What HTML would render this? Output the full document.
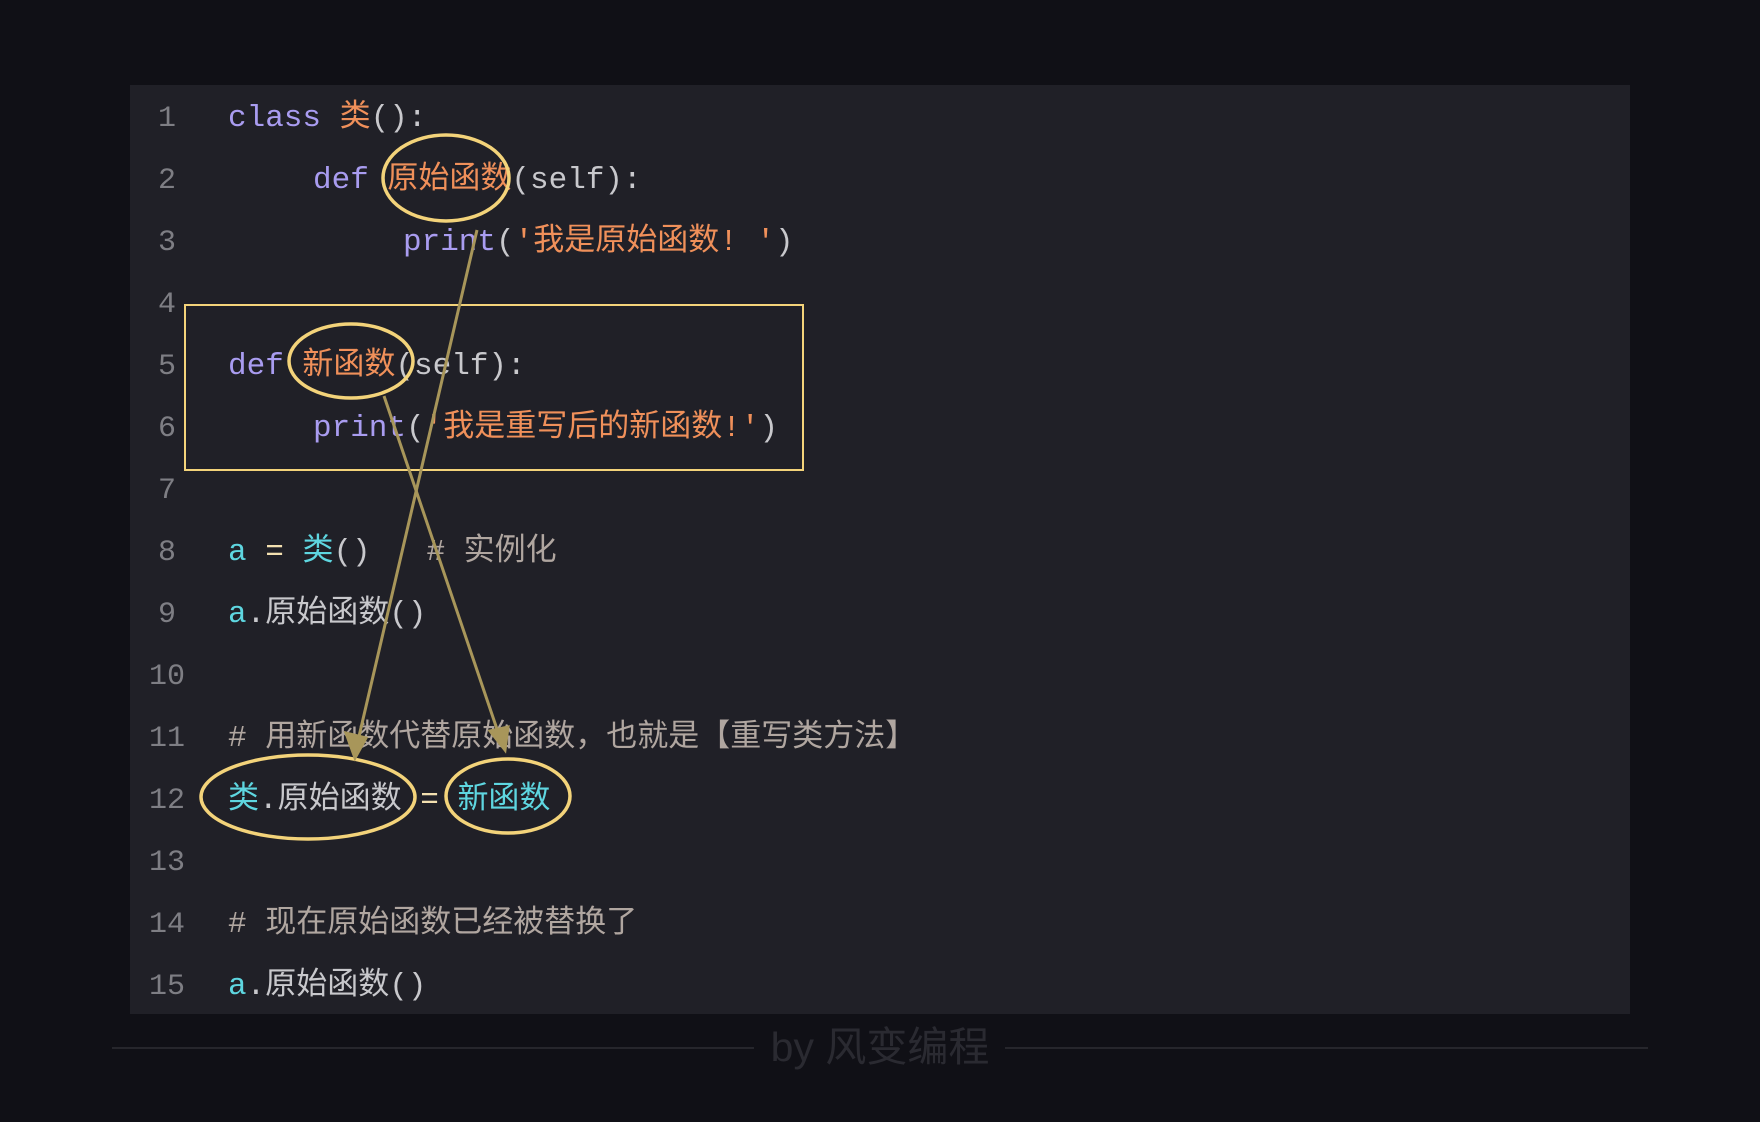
<!DOCTYPE html>
<html><head><meta charset="utf-8"><style>
body{margin:0;width:1760px;height:1122px;background:#101016;overflow:hidden;position:relative;font-family:"Liberation Mono","Noto Sans CJK SC",monospace;}
.panel{position:absolute;left:130px;top:85px;width:1500px;height:929px;background:#202027;}
.l{position:absolute;height:40px;line-height:40px;font-size:31px;white-space:pre;color:#c8c8cc;margin-top:3px}
.n{position:absolute;width:60px;text-align:center;left:137px;color:#7e7e84;height:40px;line-height:40px;font-size:30px;margin-top:3px}
.k{color:#a99cf0}.o{color:#f0905a}.c{color:#5ed6e0}.g{color:#b0a6a0}.y{color:#f3e0b0}
.f{position:absolute;top:1022px;left:0;width:1760px;text-align:center;font-family:"Liberation Sans","Noto Sans CJK SC",sans-serif;font-size:41px;color:#2a2a31;line-height:50px}
</style></head><body>
<div class="panel"></div>
<div style="position:absolute;left:112px;top:1047px;width:642px;height:2px;background:#26262c"></div>
<div style="position:absolute;left:1005px;top:1047px;width:643px;height:2px;background:#26262c"></div>
<div class="f">by 风变编程</div>

<div class="n" style="top:96px">1</div>
<div class="n" style="top:158px">2</div>
<div class="n" style="top:220px">3</div>
<div class="n" style="top:282px">4</div>
<div class="n" style="top:344px">5</div>
<div class="n" style="top:406px">6</div>
<div class="n" style="top:468px">7</div>
<div class="n" style="top:530px">8</div>
<div class="n" style="top:592px">9</div>
<div class="n" style="top:654px">10</div>
<div class="n" style="top:716px">11</div>
<div class="n" style="top:778px">12</div>
<div class="n" style="top:840px">13</div>
<div class="n" style="top:902px">14</div>
<div class="n" style="top:964px">15</div>

<div class="l" style="top:96px;left:228px"><span class="k">class</span> <span class="o">类</span>():</div>
<div class="l" style="top:158px;left:313px"><span class="k">def</span> <span class="o">原始函数</span>(self):</div>
<div class="l" style="top:220px;left:403px"><span class="k">print</span>(<span class="o">'我是原始函数! '</span>)</div>
<div class="l" style="top:344px;left:228px"><span class="k">def</span> <span class="o">新函数</span>(self):</div>
<div class="l" style="top:406px;left:313px"><span class="k">print</span>(<span class="o">'我是重写后的新函数!'</span>)</div>
<div class="l" style="top:530px;left:228px"><span class="c">a</span> <span class="y">=</span> <span class="c">类</span>()   <span class="g"># 实例化</span></div>
<div class="l" style="top:592px;left:228px"><span class="c">a</span>.原始函数()</div>
<div class="l g" style="top:716px;left:228px"># 用新函数代替原始函数，也就是【重写类方法】</div>
<div class="l" style="top:778px;left:228px"><span class="c">类</span>.原始函数 <span class="y">=</span> <span class="c">新函数</span></div>
<div class="l g" style="top:902px;left:228px"># 现在原始函数已经被替换了</div>
<div class="l" style="top:964px;left:228px"><span class="c">a</span>.原始函数()</div>

<svg style="position:absolute;left:0;top:0" width="1760" height="1122">
<rect x="185" y="305" width="618" height="165" fill="none" stroke="#f3d37a" stroke-width="2"/>
<g fill="none" stroke="#f3d37a" stroke-width="3.5">
<ellipse cx="446" cy="178" rx="63" ry="43"/>
<ellipse cx="351" cy="361" rx="62" ry="37"/>
<ellipse cx="308" cy="797" rx="107" ry="42"/>
<ellipse cx="508" cy="796" rx="62" ry="37"/>
</g>
<g stroke="#a8965a" stroke-width="3" fill="#a8965a">
<line x1="477" y1="230" x2="357" y2="745"/>
<line x1="384" y1="396" x2="500" y2="738"/>
<polygon points="355,758 346,733 366,738"/>
<polygon points="505,750 490,731 508,727"/>
</g>
</svg>
</body></html>
